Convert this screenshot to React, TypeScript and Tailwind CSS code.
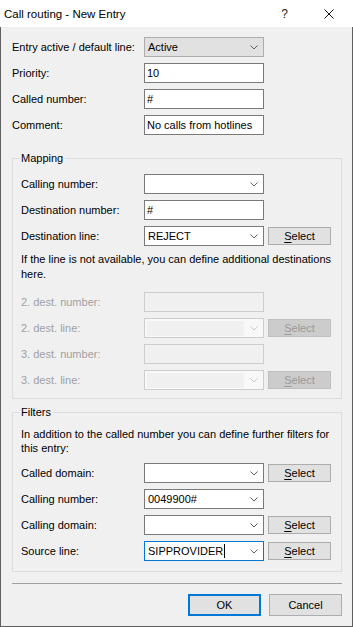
import type { ReactNode } from "react";

type ComboKind = "list" | "edit" | "disabled";

function Chevron({ disabled }: { disabled?: boolean }) {
  return (
    <svg width="8" height="5" viewBox="0 0 8 5" className="shrink-0">
      <path
        d="M0.5 0.5 L4 4 L7.5 0.5"
        fill="none"
        stroke={disabled ? "#c8c8c8" : "#606060"}
        strokeWidth="1"
      />
    </svg>
  );
}

function Combo({ value, kind = "edit", focused }: { value?: string; kind?: ComboKind; focused?: boolean }) {
  if (kind === "disabled") {
    return (
      <div className="flex h-[20px] w-[120px] items-center border border-[#cccccc] bg-[#f8f8f8] pl-[2px] pr-[5px]">
        <div className="h-[15px] w-[97px] bg-[#f0f0f0]" />
        <div className="ml-auto">
          <Chevron disabled />
        </div>
      </div>
    );
  }
  return (
    <div
      className={`flex h-[20px] w-[120px] items-center border pl-[3px] pr-[5px] ${
        kind === "list" ? "border-[#adadad] bg-[#e1e1e1]" : focused ? "border-[#0078d7] bg-white" : "border-[#7a7a7a] bg-white"
      }`}
    >
      <span className="whitespace-nowrap">{value}</span>
      {focused && <span className="ml-px h-[14px] w-px bg-black" />}
      <div className="ml-auto">
        <Chevron />
      </div>
    </div>
  );
}

function TextBox({ value, disabled }: { value?: string; disabled?: boolean }) {
  return (
    <div
      className={`flex h-[20px] w-[120px] items-center border pl-[2px] ${
        disabled ? "border-[#cccccc] bg-[#f0f0f0]" : "border-[#7a7a7a] bg-white"
      }`}
    >
      <span className="whitespace-nowrap">{value}</span>
    </div>
  );
}

function SelectButton({ disabled }: { disabled?: boolean }) {
  return (
    <div
      className={`ml-[4px] flex h-[18px] w-[63px] items-center justify-center border ${
        disabled ? "border-[#bfbfbf] bg-[#cccccc] text-[#9a9a9a]" : "border-[#adadad] bg-[#e1e1e1] text-black"
      }`}
    >
      <span>
        <span className="underline underline-offset-[2px]">S</span>elect
      </span>
    </div>
  );
}

function Row({
  label,
  wide,
  disabled,
  children,
}: {
  label: string;
  wide?: boolean;
  disabled?: boolean;
  children: ReactNode;
}) {
  return (
    <div className="flex h-[20px] items-center">
      <span
        className={`shrink-0 whitespace-nowrap ${wide ? "w-[132px]" : "w-[123px]"} ${
          disabled ? "text-[#a0a0a0]" : "text-black"
        }`}
      >
        {label}
      </span>
      {children}
    </div>
  );
}

export default function App() {
  return (
    <div className="flex h-[627px] w-[353px] flex-col font-['Liberation_Sans',Arial,sans-serif] text-[11px] leading-[14px] text-black">
      {/* title bar */}
      <div className="flex h-[27px] shrink-0 items-center bg-white pl-[4px] pr-[19px] pt-[1px]">
        <span className="text-[11.5px]">Call routing - New Entry</span>
        <span className="ml-auto text-[12px] text-[#222]">?</span>
        <svg width="10" height="10" viewBox="0 0 10 10" className="ml-[36px]">
          <path d="M0.5 0.5 L9.5 9.5 M9.5 0.5 L0.5 9.5" stroke="#111" strokeWidth="1" />
        </svg>
      </div>

      <div className="flex flex-1 flex-col border-x border-b border-[#5f5f5f] bg-[#f0f0f0] pl-[11px] pr-[10px] pt-[10px]">
        <div className="flex flex-col gap-[6px]">
          <Row label="Entry active / default line:" wide>
            <Combo kind="list" value="Active" />
          </Row>
          <Row label="Priority:" wide>
            <TextBox value="10" />
          </Row>
          <Row label="Called number:" wide>
            <TextBox value="#" />
          </Row>
          <Row label="Comment:" wide>
            <TextBox value="No calls from hotlines" />
          </Row>
        </div>

        <fieldset className="mt-[16px] border border-[#dcdcdc] pb-[8px] pl-[8px] pr-[8px] pt-[8px]">
          <legend className="ml-[-2px] px-[2px] leading-[15px]">Mapping</legend>
          <div className="flex flex-col gap-[6px]">
            <Row label="Calling number:">
              <Combo />
            </Row>
            <Row label="Destination number:">
              <TextBox value="#" />
            </Row>
            <Row label="Destination line:">
              <Combo value="REJECT" />
              <SelectButton />
            </Row>
          </div>
          <p className="mt-[6px] whitespace-nowrap leading-[15px]">
            If the line is not available, you can define additional destinations
            <br />
            here.
          </p>
          <div className="mt-[10px] flex flex-col gap-[6px]">
            <Row label="2. dest. number:" disabled>
              <TextBox disabled />
            </Row>
            <Row label="2. dest. line:" disabled>
              <Combo kind="disabled" />
              <SelectButton disabled />
            </Row>
            <Row label="3. dest. number:" disabled>
              <TextBox disabled />
            </Row>
            <Row label="3. dest. line:" disabled>
              <Combo kind="disabled" />
              <SelectButton disabled />
            </Row>
          </div>
        </fieldset>

        <fieldset className="mt-[6px] border border-[#dcdcdc] pb-[10px] pl-[8px] pr-[8px] pt-[7px]">
          <legend className="ml-[-2px] px-[2px] leading-[15px]">Filters</legend>
          <p className="whitespace-nowrap leading-[14px]">
            In addition to the called number you can define further filters for
            <br />
            this entry:
          </p>
          <div className="mt-[8px] flex flex-col gap-[6px]">
            <Row label="Called domain:">
              <Combo />
              <SelectButton />
            </Row>
            <Row label="Calling number:">
              <Combo value="0049900#" />
            </Row>
            <Row label="Calling domain:">
              <Combo />
              <SelectButton />
            </Row>
            <Row label="Source line:">
              <Combo value="SIPPROVIDER" focused />
              <SelectButton />
            </Row>
          </div>
        </fieldset>

        <div className="mt-[11px] h-px bg-[#a0a0a0]" />

        <div className="mt-[10px] flex justify-end gap-[8px]">
          <div className="flex h-[22px] w-[73px] items-center justify-center border-2 border-[#0078d7] bg-[#e1e1e1]">
            OK
          </div>
          <div className="flex h-[22px] w-[73px] items-center justify-center border border-[#adadad] bg-[#e1e1e1]">
            Cancel
          </div>
        </div>
      </div>
    </div>
  );
}
